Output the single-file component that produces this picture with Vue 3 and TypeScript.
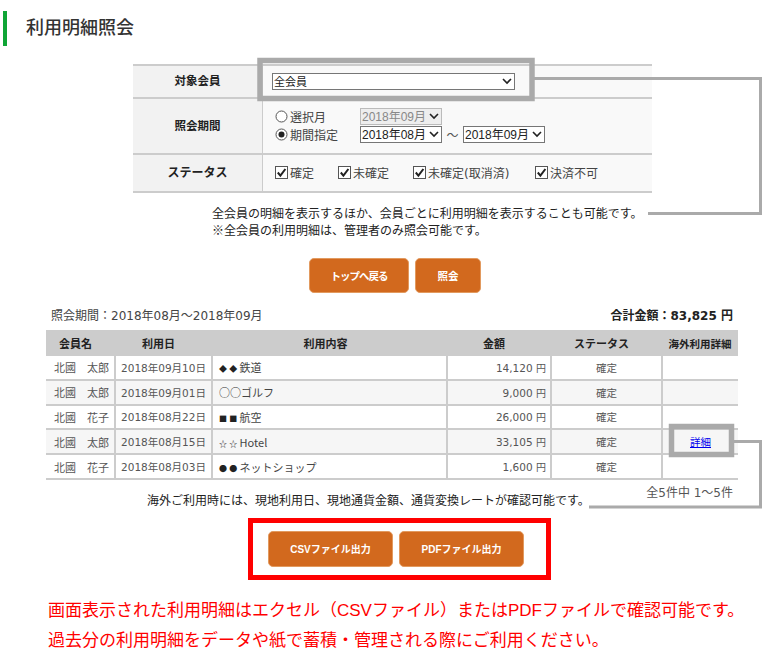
<script setup lang="ts">
interface Row { name: string; date: string; mark: string; small: boolean; item: string; amount: string; detail?: boolean }
const rows: Row[] = [
  { name: '北國　太郎', date: '2018年09月10日', mark: '◆◆', small: true, item: '鉄道', amount: '14,120' },
  { name: '北國　太郎', date: '2018年09月01日', mark: '○○', small: false, item: 'ゴルフ', amount: '9,000' },
  { name: '北國　花子', date: '2018年08月22日', mark: '■■', small: true, item: '航空', amount: '26,000' },
  { name: '北國　太郎', date: '2018年08月15日', mark: '☆☆', small: true, item: 'Hotel', amount: '33,105', detail: true },
  { name: '北國　花子', date: '2018年08月03日', mark: '●●', small: true, item: 'ネットショップ', amount: '1,600' },
]
const statuses = ['確定', '未確定', '未確定(取消済)', '決済不可']
</script>

<template>
  <div class="page">
    <h1 class="title">利用明細照会</h1>

    <div class="form">
      <div class="form-row r1">
        <div class="label">対象会員</div>
        <div class="value"><select class="sel wide"><option>全会員</option></select></div>
      </div>
      <div class="form-row r2">
        <div class="label">照会期間</div>
        <div class="value period">
          <div class="line">
            <span class="radio"><svg width="13" height="13" viewBox="0 0 13 13"><circle cx="6.5" cy="6.5" r="5.5" fill="#fff" stroke="#555"/></svg>選択月</span>
            <select class="sel month" disabled><option>2018年09月</option></select>
          </div>
          <div class="line">
            <span class="radio"><svg width="13" height="13" viewBox="0 0 13 13"><circle cx="6.5" cy="6.5" r="5.5" fill="#fff" stroke="#555"/><circle cx="6.5" cy="6.5" r="3" fill="#222"/></svg>期間指定</span>
            <select class="sel month"><option>2018年08月</option></select>
            <span class="tilde">～</span>
            <select class="sel month"><option>2018年09月</option></select>
          </div>
        </div>
      </div>
      <div class="form-row r3">
        <div class="label">ステータス</div>
        <div class="value checks">
          <span v-for="s in statuses" :key="s" class="check">
            <svg width="13" height="13" viewBox="0 0 13 13"><rect x=".5" y=".5" width="12" height="12" fill="#fff" stroke="#555"/><path d="M2.8 6.5 5.4 9.6 10.4 3" fill="none" stroke="#222" stroke-width="2"/></svg>{{ s }}
          </span>
        </div>
      </div>
    </div>

    <p class="note">全会員の明細を表示するほか、会員ごとに利用明細を表示することも可能です。<br><span class="cjk">※</span>全会員の利用明細は、管理者のみ照会可能です。</p>

    <div class="actions top">
      <button class="btn back">トップへ戻る</button>
      <button class="btn search">照会</button>
    </div>

    <div class="summary">
      <span>照会期間：2018年08月～2018年09月</span>
      <strong>合計金額：83,825 円</strong>
    </div>

    <table class="list">
      <colgroup>
        <col class="c1"><col class="c2"><col class="c3"><col class="c4"><col class="c5"><col class="c6">
      </colgroup>
      <thead>
        <tr>
          <th class="th-l">会員名</th><th class="th-l">利用日</th><th class="th-m">利用内容</th>
          <th class="th-amount">金額</th><th class="th-l">ステータス</th><th class="th-last">海外利用詳細</th>
        </tr>
      </thead>
      <tbody>
        <tr v-for="r in rows" :key="r.date">
          <td class="name">{{ r.name }}</td>
          <td class="date">{{ r.date }}</td>
          <td class="item"><span class="mark" :class="{ tiny: r.small }">{{ r.mark }}</span>{{ r.item }}</td>
          <td class="amount">{{ r.amount }} <small>円</small></td>
          <td class="center">確定</td>
          <td class="center"><a v-if="r.detail" href="#" class="link">詳細</a></td>
        </tr>
      </tbody>
    </table>

    <div class="foot">
      <p class="foot-note">海外ご利用時には、現地利用日、現地通貨金額、通貨変換レートが確認可能です。</p>
      <span class="pager">全5件中 1～5件</span>
    </div>

    <div class="outbox">
      <button class="btn dl">CSVファイル出力</button>
      <button class="btn dl">PDFファイル出力</button>
    </div>

    <p class="red">画面表示された利用明細はエクセル（CSVファイル）またはPDFファイルで確認可能です。<br>過去分の利用明細をデータや紙で蓄積・管理される際にご利用ください。</p>

    <svg class="callouts" width="762" height="650" viewBox="0 0 762 650" fill="none" stroke="#aaa">
      <rect x="260" y="60.5" width="272" height="38" stroke-width="5.5"/>
      <path d="M534 78.5H760.5V213.5H648" stroke-width="3"/>
      <rect x="671.5" y="426.5" width="60" height="28" stroke-width="5.5"/>
      <path d="M734 441.5H760.5V507H589" stroke-width="3"/>
    </svg>
  </div>
</template>

<style scoped>
.page {
  position: relative;
  width: 762px;
  height: 650px;
  overflow: hidden;
  background: #fff;
  color: #333;
  font-family: "DejaVu Sans", "Noto Sans CJK JP", sans-serif;
  font-size: 12px;
}
.cjk { font-family: "Noto Sans CJK JP", sans-serif; line-height: 0; }
.title {
  margin: 11px 0 0 3px;
  height: 35px;
  padding-left: 19px;
  border-left: 4px solid #0fa536;
  font-family: "Noto Sans CJK JP", sans-serif;
  font-size: 18px;
  font-weight: 500;
  line-height: 30px;
  color: #333;
}
.form {
  width: 519px;
  margin: 18px 0 0 133px;
  border-top: 2px solid #ccc;
}
.form-row {
  display: flex;
  border-bottom: 2px solid #ccc;
}
.r1 { height: 31px; }
.r2 { height: 54px; }
.r3 { height: 36px; }
.label {
  width: 130px;
  box-sizing: border-box;
  padding-bottom: 3px;
  display: flex;
  align-items: center;
  justify-content: center;
  background: #f2f2f2;
  border-right: 1px solid #ccc;
  font-weight: 700;
  color: #222;
}
.r1 .label, .r2 .label { font-size: 11.5px; }
.value {
  flex: 1;
  display: flex;
  align-items: center;
  padding-left: 9px;
  background: #f9f9f9;
  color: #444;
}
.period {
  flex-direction: column;
  align-items: flex-start;
  justify-content: center;
  gap: 2px;
  padding-left: 12px;
  padding-bottom: 1px;
}
.line { display: flex; align-items: center; height: 16px; }
.radio { display: flex; align-items: center; width: 85px; gap: 2px; }
.sel {
  appearance: none;
  height: 17px;
  padding: 0 12px 0 1px;
  border: 1px solid #767676;
  border-radius: 0;
  background: #fff url("data:image/svg+xml,%3Csvg xmlns='http://www.w3.org/2000/svg' width='10' height='7'%3E%3Cpath d='M1 1l4 4 4-4' fill='none' stroke='%23222' stroke-width='1.6'/%3E%3C/svg%3E") no-repeat right 2px center;
  color: #222;
  font-family: "Liberation Sans", "Noto Sans CJK JP", sans-serif;
  font-size: 12px;
}
.sel:disabled {
  background-color: #eee;
  border-color: #bbb;
  color: #888;
  opacity: 1;
}
.wide { width: 243px; font-size: 11px; }
.month { width: 82px; }
.tilde { width: 21px; text-align: center; color: #555; }
.checks { padding-left: 12px; padding-bottom: 2px; }
.check { display: flex; align-items: center; gap: 2px; color: #444; }
.check:nth-child(1) { width: 63px; }
.check:nth-child(2) { width: 75px; }
.check:nth-child(3) { width: 122px; }
.note {
  margin: 13px 0 0 212px;
  line-height: 17px;
  color: #222;
}
.actions.top {
  display: flex;
  gap: 6px;
  margin: 18px 0 0 309px;
}
.btn {
  height: 35px;
  padding: 0;
  background: #d2691e;
  border: 1px solid #e29a5f;
  border-radius: 5px;
  color: #fff;
  font-family: "Liberation Sans", "Noto Sans CJK JP", sans-serif;
  font-size: 10.5px;
  font-weight: 700;
}
.back { width: 100px; letter-spacing: -1px; }
.search { width: 66px; }
.summary {
  display: flex;
  justify-content: space-between;
  margin: 16px 29px 0 51px;
  height: 21px;
  line-height: 15px;
  color: #444;
}
.summary strong { color: #222; font-weight: 700; }
.list {
  width: 692px;
  margin-left: 46px;
  table-layout: fixed;
  border-collapse: collapse;
  font-size: 10.5px;
  color: #555;
}
.c1 { width: 69px; }
.c2 { width: 97px; }
.c3 { width: 235px; }
.c4 { width: 104px; }
.c5 { width: 111px; }
.c6 { width: 76px; }
.list th {
  height: 26px;
  padding: 0;
  background: #ccc;
  color: #222;
  font-size: 11px;
  font-weight: 700;
}
.list th.th-l { padding-right: 10px; }
.list th.th-m { padding-right: 8px; }
.list th.th-amount { padding-left: 36px; text-align: left; }
.list th.th-last { font-size: 10.5px; }
.list td {
  height: 22.8px;
  padding: 0;
  border-bottom: 2px solid #ccc;
  border-left: 2px solid #ccc;
}
.list td:first-child { border-left: 0; }
.list tbody tr:nth-child(even) td { background: #f6f6f6; }
.list td.name { padding-left: 8px; font-size: 11px; }
.date { text-align: center; }
.list td.item {
  padding-left: 6px;
  color: #444;
  font-family: "Noto Sans CJK JP", sans-serif;
  font-size: 11px;
}
.mark { color: #333; }
.mark.tiny { font-size: 8px; letter-spacing: 2.3px; color: #222; }
.list td.amount { text-align: right; padding-right: 4px; }
.amount small { font-size: 10px; }
.center { text-align: center; }
.link { color: #00e; text-decoration: underline; }
.foot { display: flex; height: 38px; }
.foot-note { margin: 14px 0 0 147px; line-height: 15px; color: #222; }
.pager { margin: 6px 29px 0 auto; line-height: 15px; color: #555; }
.outbox {
  display: flex;
  gap: 6px;
  box-sizing: border-box;
  width: 303px;
  height: 62px;
  margin-left: 248px;
  padding: 8px 0 0 15px;
  border: 5px solid #f00;
}
.dl { width: 125px; height: 36px; font-size: 10px; }
.red {
  margin: 16px 0 0 48px;
  font-family: "Liberation Sans", "Noto Sans CJK JP", sans-serif;
  font-size: 17px;
  line-height: 30px;
  color: #f00;
  white-space: nowrap;
}
.callouts {
  position: absolute;
  left: 0;
  top: 0;
  pointer-events: none;
}
</style>
